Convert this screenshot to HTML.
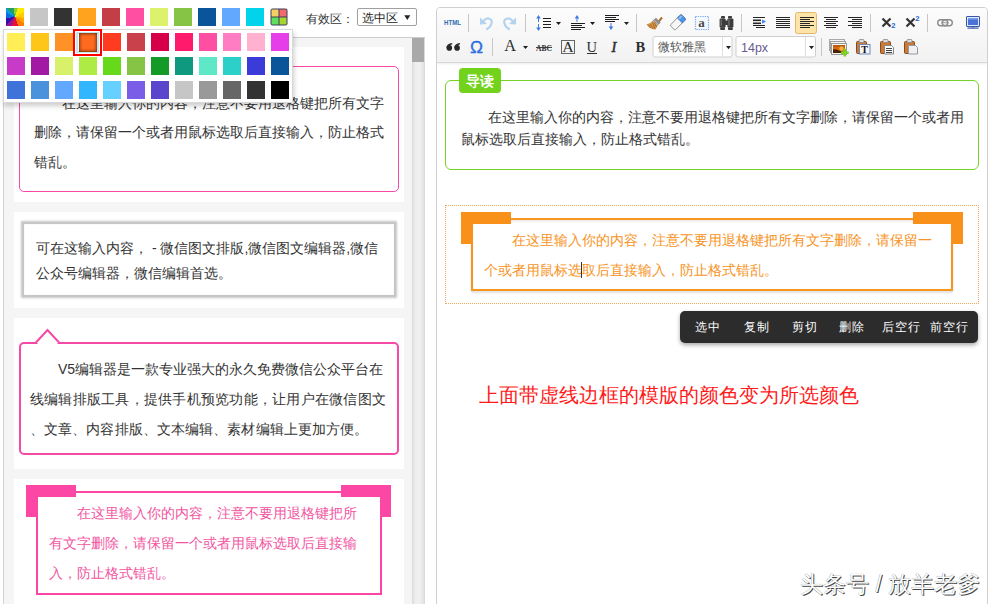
<!DOCTYPE html>
<html><head><meta charset="utf-8">
<style>
*{margin:0;padding:0;box-sizing:border-box}
html,body{width:995px;height:604px;overflow:hidden;background:#fff;font-family:"Liberation Sans",sans-serif;color:#333}
.a{position:absolute}
.sw{position:absolute;width:18px;height:18px}
.t14{font-size:14px;line-height:30px;white-space:nowrap}
</style></head><body>

<!-- top swatch bar -->
<div class="sw" style="left:6px;top:8px;background:conic-gradient(#8cd03c 0deg 18deg,#ffe800 18deg 60deg,#ffcc00 60deg 95deg,#ffa400 95deg 125deg,#ff7c00 125deg 160deg,#e8103a 160deg 200deg,#9a148e 200deg 228deg,#3a0caa 228deg 262deg,#0a6ee0 262deg 298deg,#089ee8 298deg 318deg,#22a05e 318deg 350deg,#8cd03c 350deg)"></div>
<div class="sw" style="left:30px;top:8px;background:#c6c6c6"></div>
<div class="sw" style="left:54px;top:8px;background:#333"></div>
<div class="sw" style="left:78px;top:8px;background:#ffa31f"></div>
<div class="sw" style="left:102px;top:8px;background:#c43e48"></div>
<div class="sw" style="left:126px;top:8px;background:#ff4fa3"></div>
<div class="sw" style="left:150px;top:8px;background:#dcf26c"></div>
<div class="sw" style="left:174px;top:8px;background:#86c445"></div>
<div class="sw" style="left:198px;top:8px;background:#0a5499"></div>
<div class="sw" style="left:222px;top:8px;background:#62a8ff"></div>
<div class="sw" style="left:246px;top:8px;background:#00d3ea"></div>
<svg class="a" style="left:270px;top:8px" width="18" height="18"><rect x="0.5" y="0.5" width="17" height="17" rx="2" fill="#3d3d5c"/><rect x="1.5" y="1.5" width="7" height="7" fill="#f4cf62"/><rect x="9.5" y="1.5" width="7" height="7" fill="#f26a6a"/><rect x="1.5" y="9.5" width="7" height="7" fill="#5ee05e"/><rect x="9.5" y="9.5" width="7" height="7" fill="#a6d62e"/></svg>

<div class="a" style="left:305.5px;top:10.8px;font-size:12px;line-height:16px;color:#333">有效区：</div>
<div class="a" style="left:357px;top:8px;width:60px;height:18px;border:1px solid #a0a0a0;border-radius:2px;font-size:12px;line-height:16px;color:#222;padding-left:4px;padding-top:0.8px">选中区<svg class="a" style="left:46px;top:5.5px" width="7" height="6"><path d="M0.3 0.3 L6.3 0.3 L3.3 5 Z" fill="#222"/></svg></div>

<!-- left panel -->
<div class="a" style="left:3px;top:37px;width:422px;height:567px;background:#f5f5f5;border-left:1px solid #d2d2d2;border-top:1px solid #cccccc"></div>
<!-- scrollbar -->
<div class="a" style="left:412px;top:38px;width:13px;height:566px;background:linear-gradient(90deg,#dadada,#eeeeee 25%,#f0f0f0 60%,#e2e2e2 90%,#d6d6d6)"></div>
<div class="a" style="left:412px;top:38px;width:12px;height:24px;background:#a9a9a9"></div>

<!-- card 1 -->
<div class="a" style="left:14px;top:47px;width:390px;height:155px;background:#fff"></div>
<div class="a" style="left:19px;top:66px;width:380px;height:126px;border:1.3px solid #fa4aa8;border-radius:5px"></div>
<div class="a t14" style="left:34px;top:88.5px;line-height:29.5px;color:#333">
<div style="text-indent:28px">在这里输入你的内容，注意不要用退格键把所有文字</div>
<div>删除，请保留一个或者用鼠标选取后直接输入，防止格式</div>
<div>错乱。</div>
</div>

<!-- card 2 -->
<div class="a" style="left:14px;top:212px;width:390px;height:96px;background:#fff"></div>
<div class="a" style="left:22px;top:222px;width:374px;height:75px;border:2px solid #c6c6c6;box-shadow:0 0 2px 1px #c8c8c8, inset 0 0 1px 0 #c8c8c8"></div>
<div class="a" style="left:36px;top:236px;font-size:14px;line-height:25px;white-space:nowrap;color:#333">
<div>可在这输入内容，  - 微信图文排版,微信图文编辑器,微信</div>
<div>公众号编辑器，微信编辑首选。</div>
</div>

<!-- card 3 -->
<div class="a" style="left:14px;top:318px;width:390px;height:151px;background:#fff"></div>
<div class="a" style="left:19px;top:342px;width:380px;height:113px;border:2px solid #f54aa6;border-radius:5px"></div>
<svg class="a" style="left:33px;top:328px" width="30" height="18"><path d="M2.5 15 L14.5 2 L26.5 15" fill="#fff" stroke="#f54aa6" stroke-width="2"/><rect x="4.5" y="14.6" width="20" height="3" fill="#fff"/></svg>
<div class="a t14" style="left:30px;top:354px;color:#333">
<div style="text-indent:28px">V5编辑器是一款专业强大的永久免费微信公众平台在</div>
<div style="letter-spacing:0.24px">线编辑排版工具，提供手机预览功能，让用户在微信图文</div>
<div style="letter-spacing:0.1px">、文章、内容排版、文本编辑、素材编辑上更加方便。</div>
</div>

<!-- card 4 -->
<div class="a" style="left:14px;top:479px;width:390px;height:125px;background:#fff"></div>
<div class="a" style="left:36px;top:491px;width:346px;height:104px;border:2px solid #fb45a4"></div>
<div class="a" style="left:26px;top:485px;width:50px;height:12px;background:#fc47a4"></div>
<div class="a" style="left:26px;top:485px;width:11px;height:32px;background:#fc47a4"></div>
<div class="a" style="left:341px;top:485px;width:50px;height:12px;background:#fc47a4"></div>
<div class="a" style="left:380px;top:485px;width:11px;height:32px;background:#fc47a4"></div>
<div class="a t14" style="left:49px;top:498px;color:#f2559f">
<div style="text-indent:28px">在这里输入你的内容，注意不要用退格键把所</div>
<div>有文字删除，请保留一个或者用鼠标选取后直接输</div>
<div>入，防止格式错乱。</div>
</div>

<!-- palette overlay -->
<div class="a" style="left:3px;top:29px;width:290px;height:74px;background:#fff;border:1px solid #d8d8d8;box-shadow:1px 3px 5px rgba(0,0,0,.2)"></div>
<div class="sw" style="left:7px;top:33px;background:#ffee55"></div>
<div class="sw" style="left:31px;top:33px;background:#ffc61a"></div>
<div class="sw" style="left:55px;top:33px;background:#ff9226"></div>
<div class="sw" style="left:79px;top:33px;background:#ff6a1f"></div>
<div class="sw" style="left:103px;top:33px;background:#ff3b22"></div>
<div class="sw" style="left:127px;top:33px;background:#c8414b"></div>
<div class="sw" style="left:151px;top:33px;background:#d6004a"></div>
<div class="sw" style="left:175px;top:33px;background:#ff1a6c"></div>
<div class="sw" style="left:199px;top:33px;background:#ff4fa3"></div>
<div class="sw" style="left:223px;top:33px;background:#ff7dc2"></div>
<div class="sw" style="left:247px;top:33px;background:#ffb1cf"></div>
<div class="sw" style="left:271px;top:33px;background:#e63ee8"></div>
<div class="sw" style="left:7px;top:57px;background:#c83ac8"></div>
<div class="sw" style="left:31px;top:57px;background:#a21aa4"></div>
<div class="sw" style="left:55px;top:57px;background:#d8f06a"></div>
<div class="sw" style="left:79px;top:57px;background:#aeec45"></div>
<div class="sw" style="left:103px;top:57px;background:#66d91a"></div>
<div class="sw" style="left:127px;top:57px;background:#86c445"></div>
<div class="sw" style="left:151px;top:57px;background:#139a27"></div>
<div class="sw" style="left:175px;top:57px;background:#0f9a80"></div>
<div class="sw" style="left:199px;top:57px;background:#5ee8c8"></div>
<div class="sw" style="left:223px;top:57px;background:#2dcfc9"></div>
<div class="sw" style="left:247px;top:57px;background:#3b3bd9"></div>
<div class="sw" style="left:271px;top:57px;background:#0a5499"></div>
<div class="sw" style="left:7px;top:81px;background:#3f73d9"></div>
<div class="sw" style="left:31px;top:81px;background:#4a93dc"></div>
<div class="sw" style="left:55px;top:81px;background:#62a8ff"></div>
<div class="sw" style="left:79px;top:81px;background:#32b7ff"></div>
<div class="sw" style="left:103px;top:81px;background:#66d1ff"></div>
<div class="sw" style="left:127px;top:81px;background:#7a5ee8"></div>
<div class="sw" style="left:151px;top:81px;background:#5a45cc"></div>
<div class="sw" style="left:175px;top:81px;background:#c6c6c6"></div>
<div class="sw" style="left:199px;top:81px;background:#999999"></div>
<div class="sw" style="left:223px;top:81px;background:#666666"></div>
<div class="sw" style="left:247px;top:81px;background:#333333"></div>
<div class="sw" style="left:271px;top:81px;background:#000000"></div>
<div class="a" style="left:73px;top:29px;width:29px;height:27px;border:2.5px solid #f00"></div>
<div class="a" style="left:76px;top:32px;width:23px;height:21px;border:2px solid #bfe6f7"></div>
<div class="sw" style="left:79px;top:33px;width:18px;height:19px;background:#ff6a1f;box-shadow:inset 0 0 3px 1px rgba(60,30,0,.7)"></div>

<!-- editor -->
<div class="a" style="left:436px;top:7px;width:552px;height:620px;border:1px solid #cfcfcf;border-radius:4px;background:#fff;overflow:hidden">
  <div class="a" style="left:0;top:0;width:550px;height:55px;background:linear-gradient(#fcfcfc,#f2f2f2);border-bottom:1px solid #d9d9d9;box-shadow:0 1px 2px rgba(0,0,0,.08)"></div>
</div>

<svg class="a" style="left:0;top:0" width="995" height="62">
<g stroke="#cdc4c4" stroke-width="1">
 <line x1="468.5" y1="14" x2="468.5" y2="32"/>
 <line x1="525.5" y1="14" x2="525.5" y2="32"/>
 <line x1="636.5" y1="14" x2="636.5" y2="32"/>
 <line x1="741.5" y1="14" x2="741.5" y2="32"/>
 <line x1="870.5" y1="14" x2="870.5" y2="32"/>
 <line x1="927.5" y1="14" x2="927.5" y2="32"/>
 <line x1="492.5" y1="38" x2="492.5" y2="56"/>
 <line x1="821.5" y1="38" x2="821.5" y2="56"/>
</g>
<!-- HTML -->
<text x="444" y="25" font-size="6.3" font-weight="bold" fill="#2b6cb0" textLength="17" lengthAdjust="spacingAndGlyphs" font-family="Liberation Sans">HTML</text>
<!-- undo / redo -->
<g fill="none" stroke="#b5d3ef" stroke-width="2.2" stroke-linecap="round">
 <path d="M483.5 21 C487 16.5 493 18.5 491.5 23.5 C490.8 26 489 28 487 29"/>
 <path d="M512.5 21 C509 16.5 503 18.5 504.5 23.5 C505.2 26 507 28 509 29"/>
</g>
<g fill="#b5d3ef">
 <path d="M480 17.5 L480 24.5 L487 24 Z"/>
 <path d="M516 17.5 L516 24.5 L509 24 Z"/>
</g>
<!-- line height -->
<g fill="#3f7be0">
 <path d="M538.5 15 L540.8 18.6 L536.2 18.6 Z"/><rect x="538" y="18" width="1" height="4"/>
 <path d="M538.5 31 L540.8 27.4 L536.2 27.4 Z"/><rect x="538" y="24" width="1" height="4"/>
 <path d="M577 15 L579.3 18.6 L574.7 18.6 Z"/><rect x="576.5" y="18" width="1" height="4"/>
 <path d="M611 30 L613.3 26.4 L608.7 26.4 Z"/><rect x="610.5" y="23" width="1" height="4"/>
</g>
<g fill="#1e1e1e">
 <rect x="543" y="18" width="8" height="1"/><rect x="543" y="21" width="8" height="1"/><rect x="543" y="24" width="8" height="1"/><rect x="543" y="27" width="8" height="1"/>
 <rect x="571" y="23" width="14" height="1"/><rect x="571" y="25" width="11" height="1"/><rect x="571" y="27" width="14" height="1"/><rect x="571" y="29" width="10" height="1"/>
 <rect x="605" y="15" width="14" height="1"/><rect x="605" y="17" width="11" height="1"/><rect x="605" y="19" width="14" height="1"/><rect x="605" y="21" width="10" height="1"/>
 <path d="M556 22 L561 22 L558.5 25 Z"/><path d="M590 22 L595 22 L592.5 25 Z"/><path d="M624 22 L629 22 L626.5 25 Z"/>
 <path d="M523 46 L528 46 L525.5 49 Z"/>
</g>
<!-- brush -->
<g>
 <path d="M657.5 21.5 L661.2 16.8 L662.8 18.3 L658.8 22.8 Z" fill="#b06a28"/>
 <path d="M652.8 20.6 L656 17.8 L660.6 22.4 L657.8 25.6 Z" fill="#8d8d8d"/>
 <path d="M653.6 19.9 L659.9 26" stroke="#d8d8d8" stroke-width="0.7"/>
 <path d="M652.8 20.6 L657.8 25.6 L655.5 29.6 C651.5 29.4 648 27 646.5 24.2 C649.2 24 651.2 22.8 652.8 20.6 Z" fill="#d4954a"/>
 <path d="M652.5 22.5 L655 28.8 M650.5 24 L652.8 29 M654.5 22.2 L656.5 27.2 M648.6 24.8 L650.6 28" stroke="#9a5e22" stroke-width="0.7" fill="none"/>
</g>
<!-- eraser -->
<g transform="rotate(-45 678 22.3)">
 <rect x="670.2" y="18.8" width="15.6" height="7" rx="1.2" fill="#f6f6f6" stroke="#8a8a8a" stroke-width="0.9"/>
 <path d="M680.6 18.8 h4 a1.2 1.2 0 0 1 1.2 1.2 v4.6 a1.2 1.2 0 0 1 -1.2 1.2 h-4 Z" fill="#4f92e8" stroke="#3a74c4" stroke-width="0.8"/>
 <rect x="681.2" y="19.6" width="4" height="1.8" fill="#8ec0f6"/>
</g>
<!-- a dotted -->
<rect x="695.5" y="16.5" width="13" height="13" fill="#f4f8ff" stroke="#7aaaf0" stroke-width="1.2" stroke-dasharray="1.3 1"/>
<text x="698.2" y="27.4" font-size="13" font-weight="bold" fill="#4a4a4a" font-family="Liberation Serif">a</text>
<!-- binoculars -->
<g fill="#3c3c3c">
 <rect x="721" y="16" width="4" height="2.6" rx="0.8"/><rect x="728" y="16" width="4" height="2.6" rx="0.8"/>
 <rect x="719.6" y="18.4" width="6" height="9" rx="1.2"/><rect x="727.4" y="18.4" width="6" height="9" rx="1.2"/>
 <rect x="725" y="20.5" width="3" height="4.5"/>
 <rect x="720.2" y="27.2" width="4.8" height="2.8" rx="0.8"/><rect x="728" y="27.2" width="4.8" height="2.8" rx="0.8"/>
</g>
<g fill="#777"><rect x="720.6" y="19.5" width="1.2" height="6.5"/><rect x="728.4" y="19.5" width="1.2" height="6.5"/></g>
<!-- indent -->
<g fill="#262626"><rect x="753" y="17" width="12" height="1"/><rect x="753" y="19.5" width="8" height="1.6"/><rect x="753" y="22.5" width="8" height="1.6"/><rect x="753" y="25" width="12" height="1"/><rect x="756" y="27" width="9" height="1"/></g>
<path d="M762 19.5 L766.2 21.6 L762 23.7 Z" fill="#4a86ee"/>
<!-- justify -->
<g fill="#262626"><rect x="776" y="17" width="14" height="1"/><rect x="776" y="19" width="14" height="1"/><rect x="776" y="21" width="14" height="1"/><rect x="776" y="23" width="14" height="1"/><rect x="776" y="25" width="14" height="1"/><rect x="776" y="27" width="14" height="1"/></g>
<!-- active left -->
<rect x="795.5" y="12.5" width="21" height="21" rx="2" fill="#fde4a9" stroke="#e2b86c" stroke-width="1"/>
<g fill="#262626"><rect x="800" y="17" width="14" height="1"/><rect x="800" y="19" width="10" height="1"/><rect x="800" y="21" width="14" height="1"/><rect x="800" y="23" width="10" height="1"/><rect x="800" y="25" width="14" height="1"/><rect x="800" y="27" width="10" height="1"/></g>
<!-- center -->
<g fill="#262626"><rect x="824" y="17" width="14" height="1"/><rect x="826" y="19" width="10" height="1"/><rect x="824" y="21" width="14" height="1"/><rect x="826" y="23" width="10" height="1"/><rect x="824" y="25" width="14" height="1"/><rect x="826" y="27" width="10" height="1"/></g>
<!-- right -->
<g fill="#262626"><rect x="848" y="17" width="14" height="1"/><rect x="852" y="19" width="10" height="1"/><rect x="848" y="21" width="14" height="1"/><rect x="852" y="23" width="10" height="1"/><rect x="848" y="25" width="14" height="1"/><rect x="852" y="27" width="10" height="1"/></g>
<!-- sub / sup -->
<g stroke="#333" stroke-width="2.2" stroke-linecap="butt">
 <path d="M882.5 18.5 L890.5 26.5 M890.5 18.5 L882.5 26.5"/>
 <path d="M906.5 18.5 L914.5 26.5 M914.5 18.5 L906.5 26.5"/>
</g>
<text x="891.3" y="28" font-size="7.6" font-weight="bold" fill="#2266dd" font-family="Liberation Sans">2</text>
<text x="915.3" y="21.2" font-size="7.6" font-weight="bold" fill="#2266dd" font-family="Liberation Sans">2</text>
<!-- link -->
<g fill="none" stroke="#8c8c8c" stroke-width="1.4">
 <rect x="937.7" y="19.7" width="10" height="6" rx="3"/>
 <rect x="942.3" y="19.7" width="10" height="6" rx="3"/>
</g>
<rect x="941" y="22.2" width="8" height="1" fill="#9a9a9a"/>
<!-- monitor -->
<rect x="966.5" y="16.5" width="13" height="10" rx="0.5" fill="#dfe8f8" stroke="#3a58a8" stroke-width="1"/>
<rect x="968" y="18" width="10" height="7" fill="#4a72d8"/>
<rect x="968" y="18" width="10" height="1.5" fill="#7da0ee"/>
<rect x="972" y="26.5" width="2" height="1" fill="#3a58a8"/>
<rect x="967.5" y="27.5" width="11" height="1.2" fill="#3a58a8"/>
<!-- row 2 -->
<g fill="#2a2a2a">
 <circle cx="449.3" cy="47.9" r="2.8"/><circle cx="457.1" cy="47.9" r="2.8"/>
 <path d="M446.5 47.9 C446.5 45 448.6 43.2 452.2 43 L452.2 44.2 C450.5 44.7 449.6 45.8 449.6 47.4 Z"/>
 <path d="M454.3 47.9 C454.3 45 456.4 43.2 460 43 L460 44.2 C458.3 44.7 457.4 45.8 457.4 47.4 Z"/>
</g>
<text x="470" y="53" font-size="16" fill="#2a6de0" stroke="#2a6de0" stroke-width="0.3" font-family="Liberation Sans" textLength="13" lengthAdjust="spacingAndGlyphs">Ω</text>
<text x="504.3" y="51.3" font-size="16.5" fill="#2e2e2e" font-family="Liberation Serif" textLength="11.8" lengthAdjust="spacingAndGlyphs">A</text>
<text x="536" y="51" font-size="8.5" fill="#333" font-family="Liberation Serif" textLength="16" lengthAdjust="spacingAndGlyphs" font-weight="bold">ABC</text>
<rect x="536" y="47" width="16" height="0.9" fill="#333"/>
<rect x="561.5" y="40.5" width="13" height="13" fill="none" stroke="#666" stroke-width="1"/>
<text x="562.3" y="51.7" font-size="15.5" fill="#2e2e2e" font-family="Liberation Serif" textLength="11.5" lengthAdjust="spacingAndGlyphs">A</text>
<text x="586.5" y="51.7" font-size="14.5" fill="#2e2e2e" font-family="Liberation Serif" textLength="10.5" lengthAdjust="spacingAndGlyphs">U</text>
<rect x="587" y="53" width="10" height="1" fill="#2e2e2e"/>
<text x="611.5" y="51.7" font-size="14.5" font-style="italic" fill="#2e2e2e" stroke="#2e2e2e" stroke-width="0.5" font-family="Liberation Serif">I</text>
<text x="635.5" y="51.7" font-size="14.5" font-weight="bold" fill="#2e2e2e" font-family="Liberation Serif" textLength="9.7" lengthAdjust="spacingAndGlyphs">B</text>
<!-- selects -->
<rect x="653" y="36.5" width="79" height="20.5" rx="2" fill="#fff" stroke="#cfcfcf" stroke-width="1"/>
<line x1="722.5" y1="37" x2="722.5" y2="56.5" stroke="#dedede"/>
<path d="M726 46 L731 46 L728.5 49.3 Z" fill="#222"/>
<rect x="736" y="36.5" width="79.5" height="20.5" rx="2" fill="#fff" stroke="#cfcfcf" stroke-width="1"/>
<line x1="805.5" y1="37" x2="805.5" y2="56.5" stroke="#dedede"/>
<path d="M809 46 L814 46 L811.5 49.3 Z" fill="#222"/>
<!-- image icon -->
<rect x="829.5" y="39.5" width="15" height="11" fill="#f4f4f4" stroke="#a8a8a8" stroke-width="1"/>
<rect x="830.5" y="41.5" width="15" height="11" fill="#f4f4f4" stroke="#a0a0a0" stroke-width="1"/>
<rect x="831.5" y="43.5" width="15" height="11" fill="#f6f6f6" stroke="#9a9a9a" stroke-width="1"/>
<rect x="833" y="45" width="12" height="8" fill="#d86a10"/>
<rect x="833" y="45" width="12" height="2" fill="#b85a10"/>
<circle cx="841.5" cy="48.5" r="2.2" fill="#f8b040"/>
<path d="M833 49.5 C835 48.5 838 50 845 52.5 L845 53 L833 53 Z" fill="#4a2008"/>
<path d="M843.5 48.8 h2.6 v2.6 h2.6 v2.6 h-2.6 v2.6 h-2.6 v-2.6 h-2.6 v-2.6 h2.6 Z" fill="#7ed321"/>
<!-- paste icons -->
<g>
 <rect x="856.5" y="41.5" width="10" height="12" rx="1" fill="#c77a3a" stroke="#8a4a1a" stroke-width="1"/>
 <rect x="859" y="39.5" width="5" height="3" rx="1" fill="#ddd" stroke="#888" stroke-width="0.8"/>
 <rect x="859.5" y="44.5" width="10.5" height="9.5" fill="#f4f6fa" stroke="#7088b8" stroke-width="1"/>
 <text x="861.2" y="52.6" font-size="10" font-weight="bold" fill="#111" font-family="Liberation Serif">T</text>
</g>
<g>
 <rect x="880.5" y="41.5" width="10" height="12" rx="1" fill="#c77a3a" stroke="#8a4a1a" stroke-width="1"/>
 <rect x="883" y="39.5" width="5" height="3" rx="1" fill="#ddd" stroke="#888" stroke-width="0.8"/>
 <path d="M884.5 45.5 h7 l2 2 v6.5 h-9 Z" fill="#fafafa" stroke="#888" stroke-width="1"/>
 <rect x="886" y="48" width="6" height="0.9" fill="#333"/><rect x="886" y="50" width="6" height="0.9" fill="#333"/><rect x="886" y="52" width="6" height="0.9" fill="#333"/>
</g>
<g>
 <rect x="904.5" y="41.5" width="10" height="12" rx="1" fill="#c77a3a" stroke="#8a4a1a" stroke-width="1"/>
 <rect x="907" y="39.5" width="5" height="3" rx="1" fill="#ddd" stroke="#888" stroke-width="0.8"/>
 <path d="M908.5 45.5 h7 l2 2 v6.5 h-9 Z" fill="#eef0f4" stroke="#999" stroke-width="1"/>
</g>
</svg>
<div class="a" style="left:658px;top:39px;font-size:12px;line-height:16px;color:#555;white-space:nowrap">微软雅黑</div>
<div class="a" style="left:741px;top:39.5px;font-size:12.5px;line-height:16px;color:#6a5a90;white-space:nowrap">14px</div>

<!-- editor content -->
<div class="a" style="left:445px;top:80px;width:534px;height:90px;border:1.5px solid #76d325;border-radius:6px"></div>
<div class="a" style="left:459px;top:68px;width:42px;height:25px;background:#72d21c;border-radius:4px;color:#fff;font-size:14px;font-weight:bold;line-height:26px;text-align:center">导读</div>
<div class="a" style="left:460.5px;top:106px;font-size:14px;line-height:22px;white-space:nowrap;letter-spacing:0;color:#333">
<div style="text-indent:27px">在这里输入你的内容，注意不要用退格键把所有文字删除，请保留一个或者用</div>
<div>鼠标选取后直接输入，防止格式错乱。</div>
</div>

<div class="a" style="left:445px;top:205px;width:534px;height:99px;border:1px dotted #f4a55a"></div>
<div class="a" style="left:471px;top:218px;width:482px;height:73px;border:2px solid #f7961f;box-shadow:0 2px 2px rgba(0,0,0,.12), inset 0 2px 2px rgba(0,0,0,.07)"></div>
<div class="a" style="left:461px;top:212px;width:50px;height:12px;background:#f8901a"></div>
<div class="a" style="left:461px;top:212px;width:11px;height:32px;background:#f8901a"></div>
<div class="a" style="left:913px;top:212px;width:50px;height:12px;background:#f8901a"></div>
<div class="a" style="left:952px;top:212px;width:11px;height:32px;background:#f8901a"></div>
<div class="a t14" style="left:484px;top:225px;color:#f79324">
<div style="text-indent:28px">在这里输入你的内容，注意不要用退格键把所有文字删除，请保留一</div>
<div>个或者用鼠标选<span style="border-left:1px solid #333;margin-left:-1px"></span>取后直接输入，防止格式错乱。</div>
</div>

<!-- context menu -->
<div class="a" style="left:680px;top:311px;width:298px;height:32px;background:#2c2c2c;border-radius:5px;box-shadow:0 2px 4px rgba(0,0,0,.35)"></div>
<div class="a" style="left:695px;top:319px;font-size:12px;line-height:16px;color:#fff;letter-spacing:1px;white-space:nowrap">选中</div>
<div class="a" style="left:744px;top:319px;font-size:12px;line-height:16px;color:#fff;letter-spacing:1px;white-space:nowrap">复制</div>
<div class="a" style="left:792px;top:319px;font-size:12px;line-height:16px;color:#fff;letter-spacing:1px;white-space:nowrap">剪切</div>
<div class="a" style="left:839px;top:319px;font-size:12px;line-height:16px;color:#fff;letter-spacing:1px;white-space:nowrap">删除</div>
<div class="a" style="left:882px;top:319px;font-size:12px;line-height:16px;color:#fff;letter-spacing:1px;white-space:nowrap">后空行</div>
<div class="a" style="left:930px;top:319px;font-size:12px;line-height:16px;color:#fff;letter-spacing:1px;white-space:nowrap">前空行</div>

<div class="a" style="left:479px;top:383px;font-size:20px;line-height:24px;color:#ff1a1a;white-space:nowrap">上面带虚线边框的模版的颜色变为所选颜色</div>

<div class="a" style="left:800px;top:570px;font-size:23px;line-height:28px;color:#fff;white-space:nowrap;text-shadow:1px 1px 0.6px rgba(40,40,40,.85),0 0 0.8px rgba(0,0,0,.6)">头条号 / 放羊老爹</div>

</body></html>
